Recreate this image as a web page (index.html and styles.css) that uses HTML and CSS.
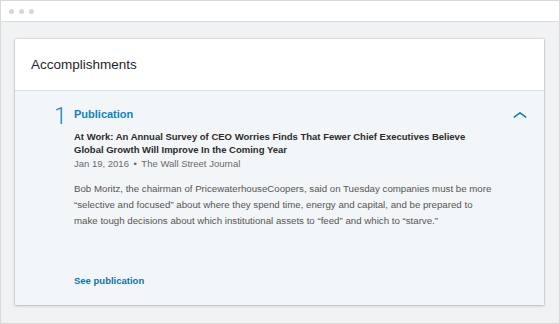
FILE: index.html
```html
<!DOCTYPE html>
<html lang="en">
<head>
    <meta charset="UTF-8">
    <meta name="viewport" content="width=device-width, initial-scale=1.0">
    <title>Accomplishments</title>
    <link rel="stylesheet" href="styles.css">
</head>
<body>
    <div class="window">
        <div class="titlebar">
            <span class="dot"></span>
            <span class="dot"></span>
            <span class="dot"></span>
        </div>

        <div class="content">
            <div class="card">
                <div class="card-header">
                    <h2>Accomplishments</h2>
                </div>

                <div class="card-body">
                    <div class="count">1</div>
                    <div class="details">
                        <div class="section-head">
                            <h3>Publication</h3>
                            <svg class="chevron" width="14" height="6" viewBox="0 0 14 6">
                                <path d="M0.8 5.3 L7 0.8 L13.2 5.3" fill="none" stroke="#0a7bbf" stroke-width="1.5"/>
                            </svg>
                        </div>

                        <h4 class="pub-title">At Work: An Annual Survey of CEO Worries Finds That Fewer Chief Executives Believe Global Growth Will Improve In the Coming Year</h4>
                        <p class="pub-meta">Jan 19, 2016 <span class="bullet">&bull;</span> The Wall Street Journal</p>

                        <p class="pub-desc">Bob Moritz, the chairman of PricewaterhouseCoopers, said on Tuesday companies must be more &ldquo;selective and focused&rdquo; about where they spend time, energy and capital, and be prepared to make tough decisions about which institutional assets to &ldquo;feed&rdquo; and which to &ldquo;starve.&rdquo;</p>

                        <a class="pub-link" href="#">See publication</a>
                    </div>
                </div>
            </div>
        </div>
    </div>
</body>
</html>
```

FILE: styles.css
```css
body {
    margin: 0;
    font-family: "Liberation Sans", Arial, sans-serif;
    background-color: #ffffff;
}

.window {
    height: 324px;
    box-sizing: border-box;
    border: 1px solid #d9d9d9;
    background-color: #f1f2f4;
    display: flex;
    flex-direction: column;
}

.titlebar {
    height: 20px;
    background-color: #ffffff;
    border-bottom: 1px solid #dcdcdc;
    display: flex;
    align-items: center;
    gap: 5px;
    padding-left: 8px;
}

.dot {
    width: 5px;
    height: 5px;
    border-radius: 50%;
    background-color: #d6d6d6;
}

.content {
    padding: 17px 15px 0 14px;
}

.card {
    height: 266px;
    display: flex;
    flex-direction: column;
    background-color: #f3f6f8;
    box-shadow: 0 0 0 1px rgba(0, 0, 0, 0.07), 0 1px 3px rgba(0, 0, 0, 0.18);
}

.card-header {
    height: 51px;
    background-color: #ffffff;
    border-bottom: 1px solid #dfe1e3;
    display: flex;
    align-items: center;
    padding-left: 16px;
}

.card-header h2 {
    margin: 0;
    font-size: 13.5px;
    font-weight: 400;
    color: #1f1f1f;
}

.card-body {
    flex: 1;
    display: flex;
    padding: 14px 17px 0 39px;
}

.count {
    width: 20px;
    font-family: Roboto, "Liberation Sans", sans-serif;
    font-size: 23px;
    font-weight: 300;
    line-height: 24px;
    color: #0d87c9;
}

.details {
    flex: 1;
    display: flex;
    flex-direction: column;
}

.section-head {
    display: flex;
    justify-content: space-between;
    align-items: center;
    height: 14px;
    margin-top: 2px;
}

.section-head h3 {
    margin: 0;
    font-size: 11px;
    font-weight: 700;
    line-height: 14px;
    color: #0a84c7;
}

.chevron {
    margin-top: 2px;
}

.pub-title {
    margin: 9px 0 0;
    width: 405px;
    font-size: 9.5px;
    font-weight: 700;
    line-height: 13.3px;
    color: #2b2b2b;
}

.pub-meta {
    margin: 0;
    font-size: 9.5px;
    line-height: 13.3px;
    color: #6a6a6a;
}

.bullet {
    margin: 0 2px;
}

.pub-desc {
    margin: 11px 0 0;
    width: 422px;
    font-size: 9.7px;
    line-height: 16.3px;
    color: #555555;
}

.pub-link {
    margin-top: 44px;
    font-size: 9.5px;
    font-weight: 700;
    line-height: 13.3px;
    color: #0a73b1;
    text-decoration: none;
}
```
